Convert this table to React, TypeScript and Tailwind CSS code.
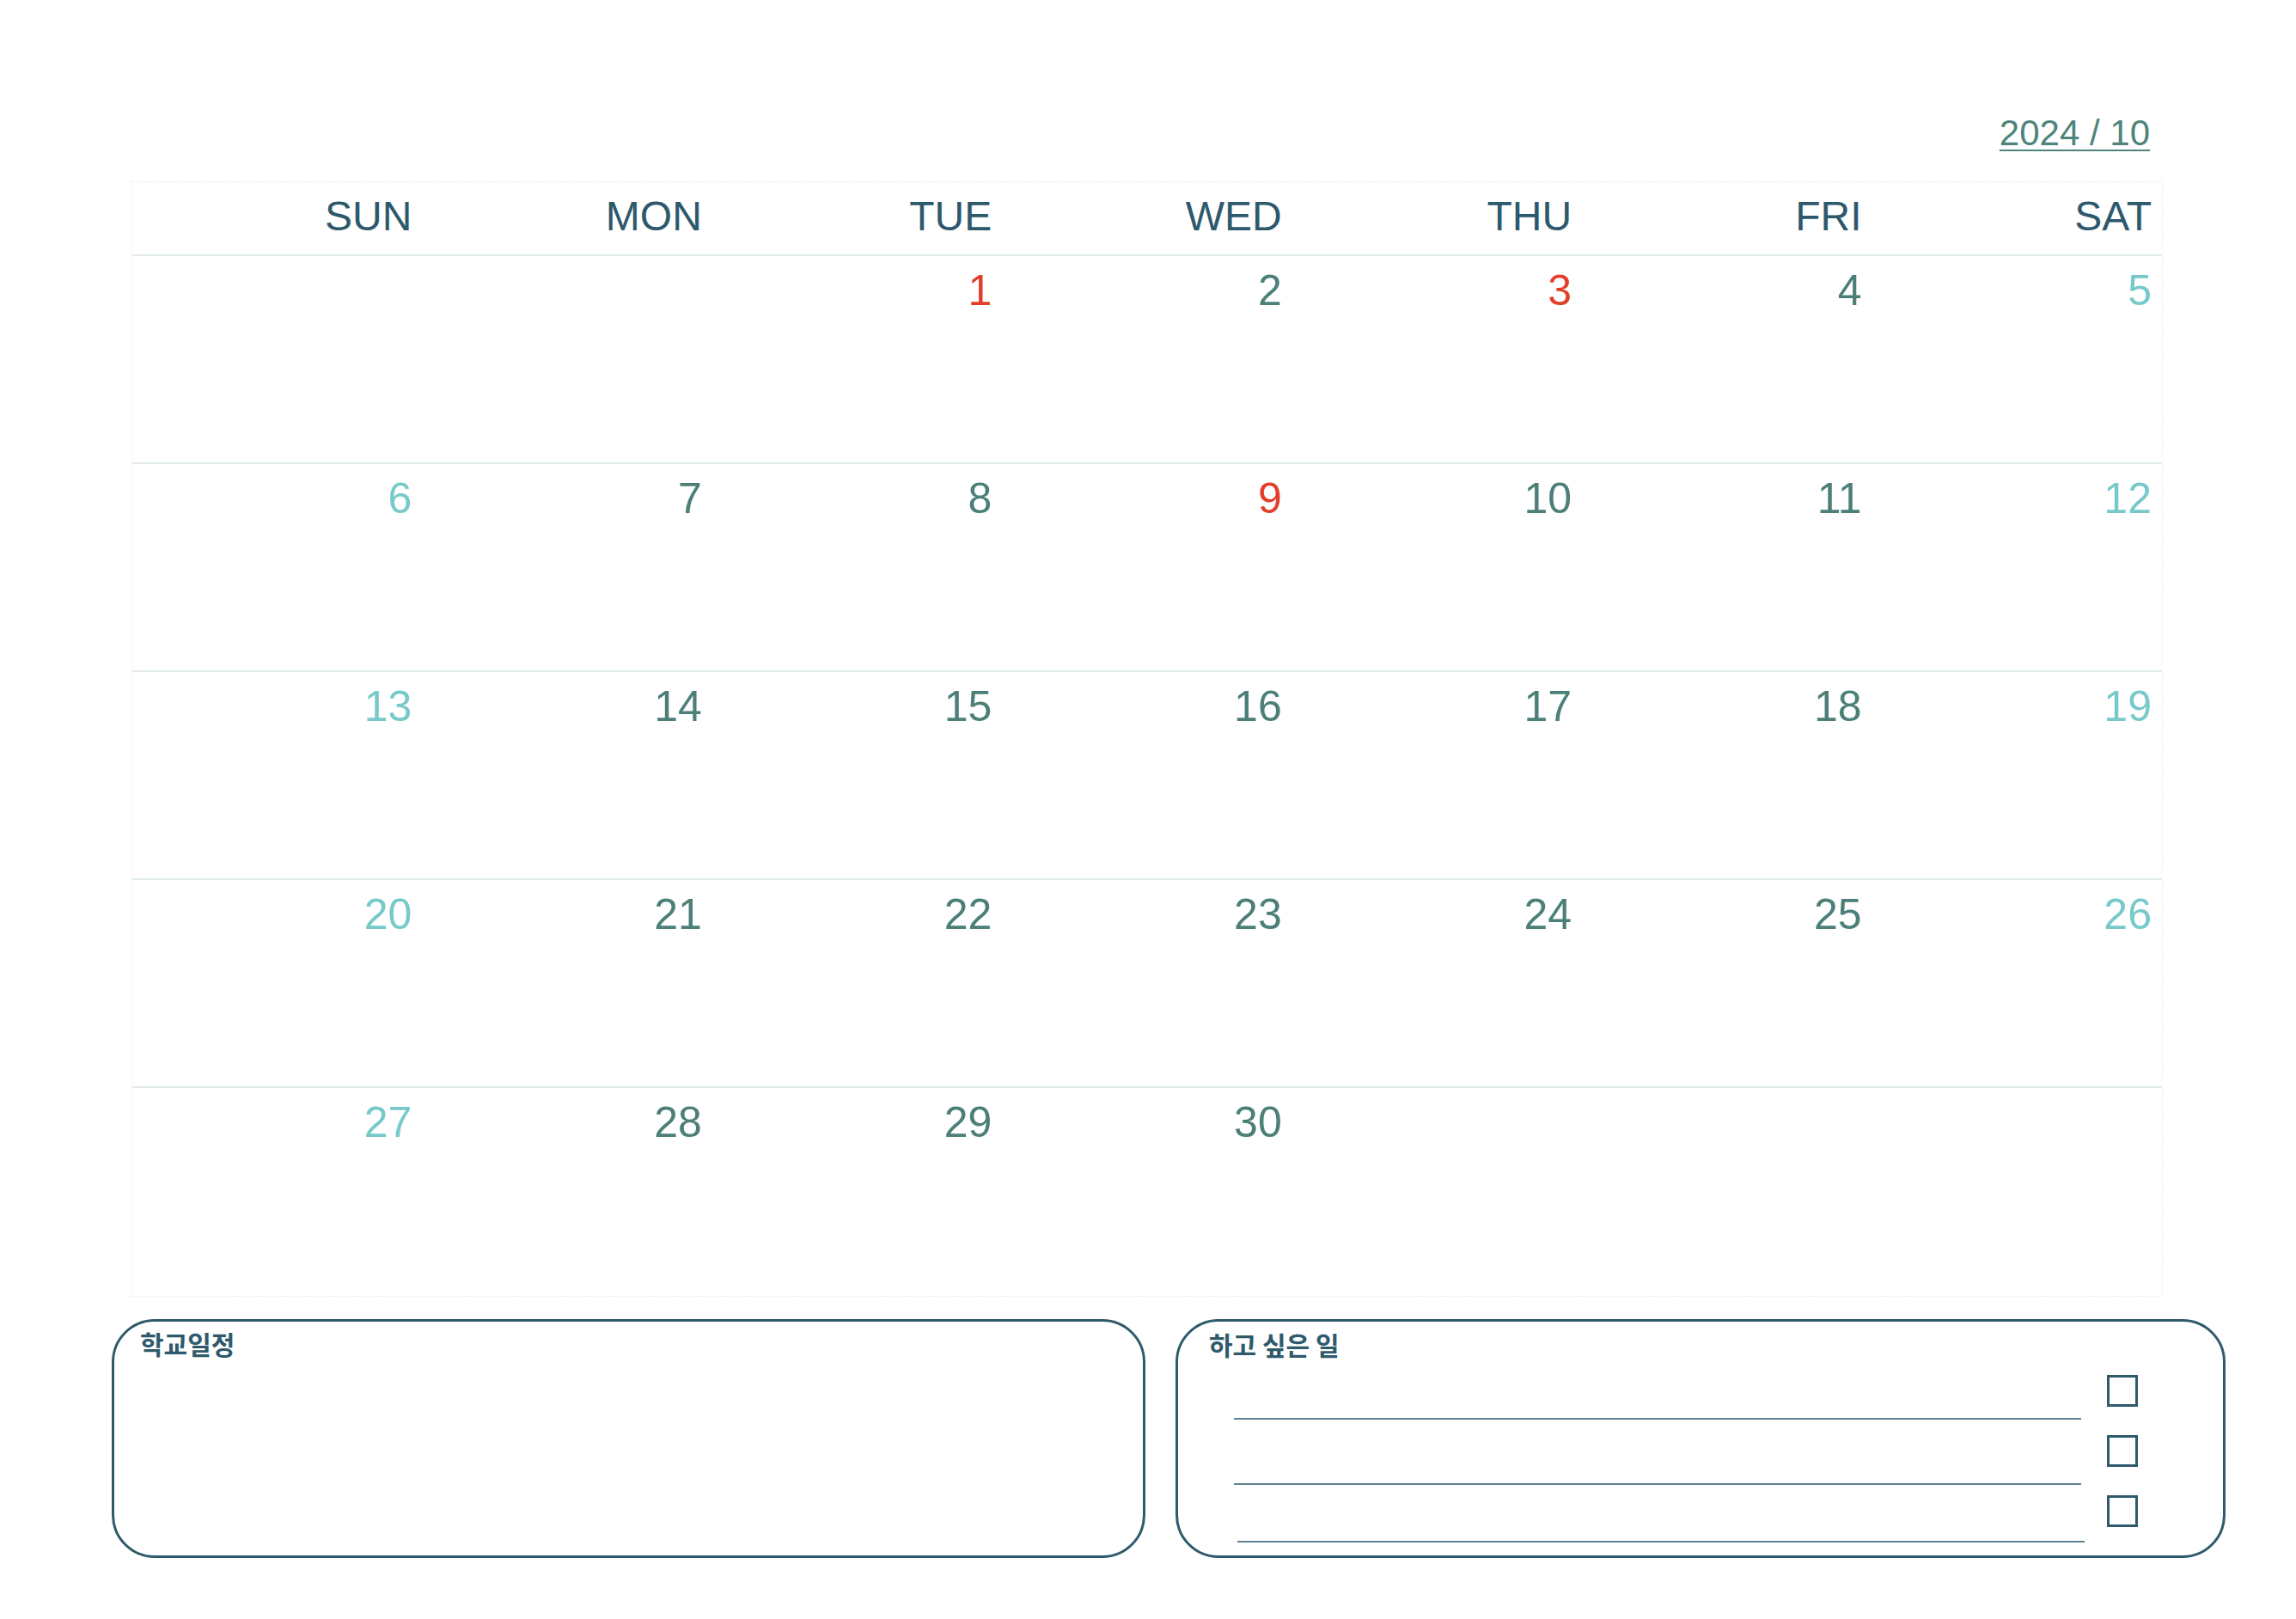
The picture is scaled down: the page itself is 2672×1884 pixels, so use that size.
import React from "react";

const DAYS = ["SUN", "MON", "TUE", "WED", "THU", "FRI", "SAT"];
const RED = new Set([1, 3, 9]);

function dayColor(day: number, col: number): string {
  if (RED.has(day)) return "text-[#e23f2b]";
  if (col === 0 || col === 6) return "text-[#78c9c9]";
  return "text-[#4b7f78]";
}

export default function App() {
  const start = 2; // Oct 1 2024 is Tuesday
  const cells: (number | null)[] = [];
  for (let i = 0; i < 35; i++) {
    const d = i - start + 1;
    cells.push(d >= 1 && d <= 30 ? d : null);
  }
  const weeks: (number | null)[][] = [];
  for (let w = 0; w < 5; w++) weeks.push(cells.slice(w * 7, w * 7 + 7));

  return (
    <div className="w-[2672px] h-[1884px] bg-white font-['Liberation_Sans','Noto_Sans_CJK_KR',sans-serif] pt-[134px]">
      <div className="ml-[153px] w-[2364px]">
        <div className="flex justify-end pr-[15px] h-[42px]">
          <span className="text-[42px] leading-none text-[#4e847b] underline decoration-[2px] underline-offset-[5px]">
            2024 / 10
          </span>
        </div>
        <div className="mt-[35px] border border-dotted border-[#e6eded]">
          <div className="grid grid-cols-7 h-[86px] border-b-2 border-[#e2ebeb]">
            {DAYS.map((d) => (
              <div
                key={d}
                className="text-right pr-[12px] pt-[16px] text-[48px] leading-none text-[#2d596d]"
              >
                {d}
              </div>
            ))}
          </div>
          {weeks.map((week, wi) => (
            <div
              key={wi}
              className={
                "grid grid-cols-7 h-[242px] " +
                (wi < 4 ? "border-b-2 border-[#e2ebeb]" : "")
              }
            >
              {week.map((day, ci) => (
                <div
                  key={ci}
                  className={
                    "text-right pr-[12px] pt-[15px] text-[50px] leading-none " +
                    (day ? dayColor(day, ci) : "")
                  }
                >
                  {day ?? ""}
                </div>
              ))}
            </div>
          ))}
        </div>
      </div>

      <div className="ml-[130px] mt-[26px] flex gap-[35px]">
        <div className="w-[1203px] h-[278px] border-[3px] border-[#2f5a6c] rounded-[50px] pl-[30px] pt-[10px]">
          <div className="font-['Noto_Sans_CJK_KR',sans-serif] font-bold text-[30px] leading-none text-[#2f5a6c]">
            학교일정
          </div>
        </div>
        <div className="w-[1222px] h-[278px] border-[3px] border-[#2f5a6c] rounded-[50px] pt-[11px]">
          <div className="pl-[36px] font-['Noto_Sans_CJK_KR',sans-serif] font-bold text-[30px] leading-none text-[#2f5a6c]">
            하고 싶은 일
          </div>
          <div className="flex pl-[65px]">
            <div className="flex flex-col w-[990px]">
              <div className="mt-[71px] h-[2px] w-[986px] bg-[#5f8293]" />
              <div className="mt-[74px] h-[2px] w-[986px] bg-[#5f8293]" />
              <div className="mt-[65px] ml-[4px] h-[2px] w-[986px] bg-[#5f8293]" />
            </div>
            <div className="ml-[26px] flex flex-col gap-[33px] pt-[21px]">
              <div className="w-[36px] h-[37px] border-[3px] border-[#2f5a6c]" />
              <div className="w-[36px] h-[37px] border-[3px] border-[#2f5a6c]" />
              <div className="w-[36px] h-[37px] border-[3px] border-[#2f5a6c]" />
            </div>
          </div>
        </div>
      </div>
    </div>
  );
}
